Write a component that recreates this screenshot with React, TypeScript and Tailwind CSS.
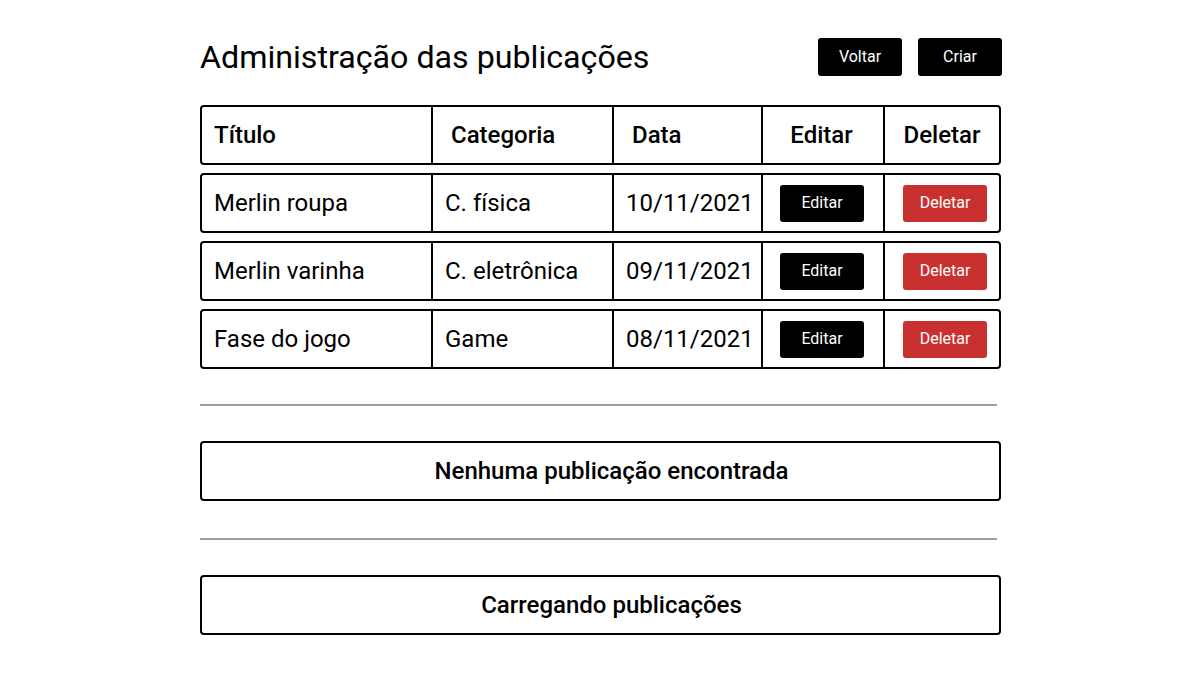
import React from 'react';

interface Post {
  title: string;
  category: string;
  date: string;
}

const posts: Post[] = [
  { title: 'Merlin roupa', category: 'C. física', date: '10/11/2021' },
  { title: 'Merlin varinha', category: 'C. eletrônica', date: '09/11/2021' },
  { title: 'Fase do jogo', category: 'Game', date: '08/11/2021' },
];

const rowBox = 'flex h-[60px] border-2 border-black rounded-[4px] text-[24px] text-black';

const App: React.FC = () => {
  return (
    <div className="min-h-[681px] bg-white font-['Roboto',sans-serif]">
      <div className="ml-[200px] w-[801px] pt-[38px]">
        {/* Header */}
        <div className="flex h-[38px] items-center justify-between">
          <h1 className="text-[32.2px] text-black leading-none">Administração das publicações</h1>
          <div className="flex gap-4 -mr-px">
            <button className="w-[84px] h-[38px] rounded-[3px] bg-black text-white text-[16px]">Voltar</button>
            <button className="w-[84px] h-[38px] rounded-[3px] bg-black text-white text-[16px]">Criar</button>
          </div>
        </div>

        {/* Table */}
        <div className="mt-[29px] flex flex-col gap-2">
          <div className={`${rowBox} font-medium`}>
            <div className="w-[229px] flex items-center pl-3">Título</div>
            <div className="w-[181px] flex items-center pl-[18px] border-l-2 border-black">Categoria</div>
            <div className="w-[149px] flex items-center pl-[18px] border-l-2 border-black">Data</div>
            <div className="w-[122px] flex items-center justify-center pr-[3px] border-l-2 border-black">Editar</div>
            <div className="flex-1 flex items-center justify-center border-l-2 border-black">Deletar</div>
          </div>
          {posts.map((post) => (
            <div key={post.title} className={rowBox}>
              <div className="w-[229px] flex items-center pl-3">{post.title}</div>
              <div className="w-[181px] flex items-center pl-3 border-l-2 border-black">{post.category}</div>
              <div className="w-[149px] flex items-center pl-3 border-l-2 border-black">{post.date}</div>
              <div className="w-[122px] flex items-center justify-center pr-[2px] border-l-2 border-black">
                <button className="w-[84px] h-[37px] rounded-[3px] bg-black text-white text-[16px]">Editar</button>
              </div>
              <div className="flex-1 flex items-center justify-center pl-[6px] border-l-2 border-black">
                <button className="w-[84px] h-[37px] rounded-[3px] bg-[#c93030] text-white text-[16px]">Deletar</button>
              </div>
            </div>
          ))}
        </div>

        {/* Empty state */}
        <div className="mt-[35px] w-[797px] h-[2px] bg-[#9e9e9e]" />
        <div className={`${rowBox} mt-[35px] items-center justify-center pl-[22px] font-medium`}>
          Nenhuma publicação encontrada
        </div>

        {/* Loading state */}
        <div className="mt-[37px] w-[797px] h-[2px] bg-[#9e9e9e]" />
        <div className={`${rowBox} mt-[35px] items-center justify-center pl-[22px] font-medium`}>
          Carregando publicações
        </div>
      </div>
    </div>
  );
};

export default App;
